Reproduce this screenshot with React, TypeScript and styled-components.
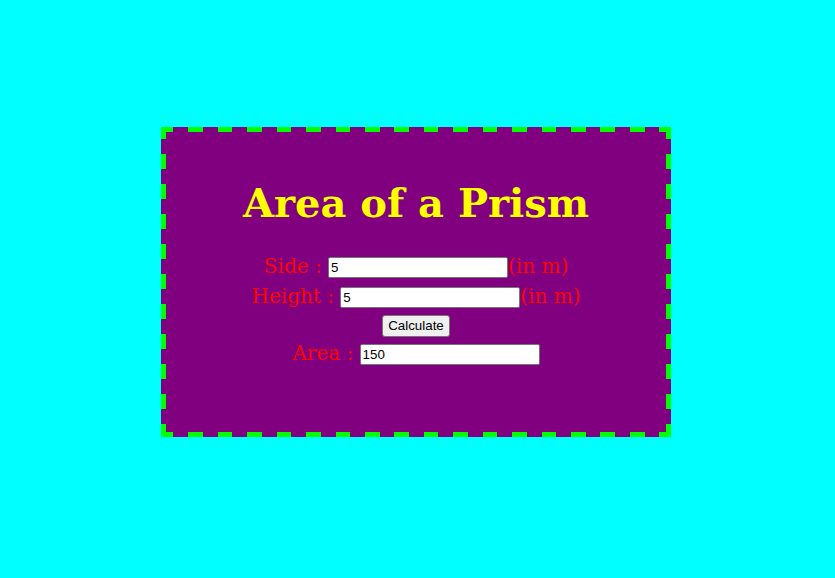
import React from "react";
import styled, { createGlobalStyle } from "styled-components";

const GlobalStyle = createGlobalStyle`
  html, body {
    margin: 0;
    padding: 0;
    background-color: #00ffff;
  }
`;

const Page = styled.div`
  min-height: 578px;
  padding: 127px 0 0 161px;
  box-sizing: border-box;
`;

// dashes drawn as gradients so their length and spacing match the screenshot
const hDash =
  "repeating-linear-gradient(90deg, #00ff00 0 12.46px, transparent 12.46px 27.3px, #00ff00 27.3px 29.44px)";
const vDash =
  "repeating-linear-gradient(180deg, #00ff00 0 12.03px, transparent 12.03px 27.3px, #00ff00 27.3px 29.97px)";

const Card = styled.div`
  width: 500px;
  height: 300px;
  border: 5px solid transparent;
  background:
    ${hDash} left top / 100% 5px no-repeat border-box,
    ${hDash} left bottom / 100% 5px no-repeat border-box,
    ${vDash} left top / 5px 100% no-repeat border-box,
    ${vDash} right top / 5px 100% no-repeat border-box,
    #800080;
  text-align: center;
  font-family: "DejaVu Serif", serif;
`;

const Title = styled.h1`
  margin: 48px 0 25px;
  font-size: 40px;
  font-weight: bold;
  line-height: 46px;
  color: #ffff00;
`;

const Row = styled.div<{ h?: number }>`
  height: ${({ h }) => h ?? 30}px;
  line-height: ${({ h }) => h ?? 30}px;
  font-size: 20px;
  color: #ff0000;
  white-space: nowrap;
`;

const Field = styled.input`
  box-sizing: border-box;
  width: 180px;
  height: 21px;
  padding: 1px 2px;
  border: 1px solid #767676;
  border-radius: 2px;
  font-family: "Liberation Sans", Arial, sans-serif;
  font-size: 13.33px;
  color: #000;
  background: #fff;
  vertical-align: middle;
`;

const Button = styled.button`
  box-sizing: border-box;
  height: 22px;
  padding: 0 5px;
  border: 1px solid #767676;
  border-radius: 3px;
  background: #efefef;
  font-family: "Liberation Sans", Arial, sans-serif;
  font-size: 13.33px;
  color: #000;
  vertical-align: middle;
`;

export default function App() {
  return (
    <>
      <GlobalStyle />
      <Page>
        <Card>
          <Title>Area of a Prism</Title>
          <Row>
            Side : <Field type="text" defaultValue="5" />(in m)
          </Row>
          <Row>
            Height : <Field type="text" defaultValue="5" />(in m)
          </Row>
          <Row h={27}>
            <Button>Calculate</Button>
          </Row>
          <Row>
            Area : <Field type="text" defaultValue="150" readOnly />
          </Row>
        </Card>
      </Page>
    </>
  );
}
